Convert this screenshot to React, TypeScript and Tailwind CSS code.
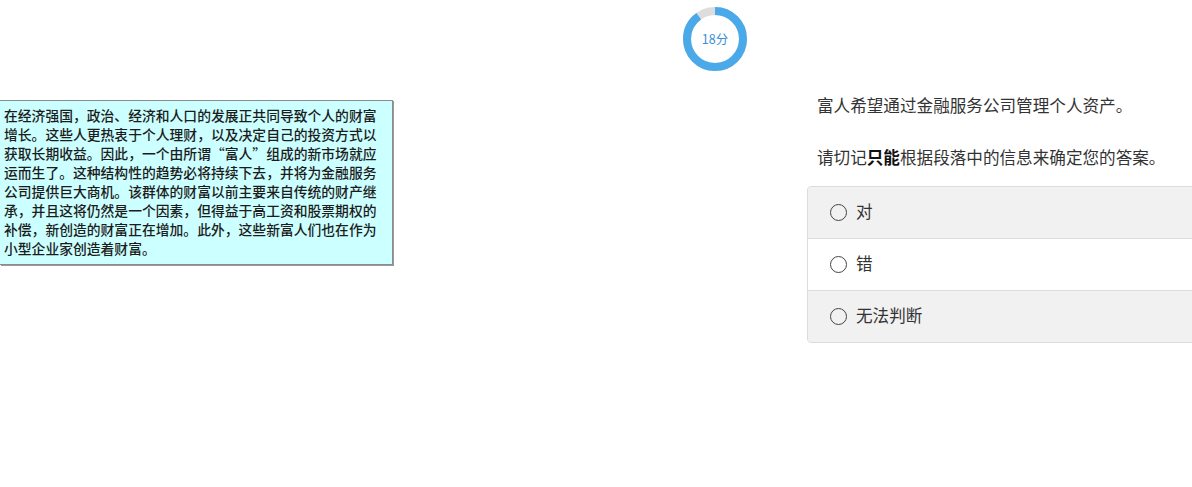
const passage = [
  "在经济强国，政治、经济和人口的发展正共同导致个人的财富",
  "增长。这些人更热衷于个人理财，以及决定自己的投资方式以",
  "获取长期收益。因此，一个由所谓“富人”组成的新市场就应",
  "运而生了。这种结构性的趋势必将持续下去，并将为金融服务",
  "公司提供巨大商机。该群体的财富以前主要来自传统的财产继",
  "承，并且这将仍然是一个因素，但得益于高工资和股票期权的",
  "补偿，新创造的财富正在增加。此外，这些新富人们也在作为",
  "小型企业家创造着财富。",
];

const options = ["对", "错", "无法判断"];

function Timer({ minutes, total }: { minutes: number; total: number }) {
  const r = 28;
  const c = 2 * Math.PI * r;
  const used = (minutes / total) * c;
  return (
    <div className="relative w-[64px] h-[64px]">
      <svg width="64" height="64" viewBox="0 0 64 64">
        <circle cx="32" cy="32" r={r} fill="none" stroke="#dddddd" strokeWidth="8" />
        <circle
          cx="32"
          cy="32"
          r={r}
          fill="none"
          stroke="#4aa9e9"
          strokeWidth="8"
          strokeDasharray={`${used} ${c}`}
          transform="rotate(-90 32 32)"
        />
      </svg>
      <div className="absolute inset-0 flex items-center justify-center text-[12.5px] text-[#3b8fd6]">
        {minutes}分
      </div>
    </div>
  );
}

export default function App() {
  return (
    <div
      className="w-[1192px] h-[487px] bg-white overflow-hidden text-[#333]"
      style={{ fontFamily: '"Noto Sans CJK SC", "Noto Sans", sans-serif' }}
    >
      <div className="pt-[7px] pl-[683px]">
        <Timer minutes={18} total={20} />
      </div>

      <div className="flex items-start mt-[22px]">
        <div className="mt-[7px] w-[393px] shrink-0 bg-[#ccffff] border border-l-0 border-[#8c8c8c] shadow-[1px_1px_0_#9a9a9a] pl-[4px] pt-[5px] pb-[6px]">
          {passage.map((line, i) => (
            <div key={i} className="text-[13.8px] leading-[19px] font-medium text-[#1c1c1c] whitespace-nowrap">
              {line}
            </div>
          ))}
        </div>

        <div className="ml-[414px] w-[420px] shrink-0">
          <p className="pl-[10px] text-[16.6px] leading-6">富人希望通过金融服务公司管理个人资产。</p>
          <p className="pl-[10px] mt-[28px] text-[16.6px] leading-6">
            请切记<span className="font-bold text-[#111]">只能</span>根据段落中的信息来确定您的答案。
          </p>

          <div className="mt-[17px] border border-[#dcdcdc] rounded-[4px] overflow-hidden">
            {options.map((opt, i) => (
              <div
                key={opt}
                className={`flex items-center gap-[9px] pl-[22px] text-[16.6px] ${
                  i % 2 === 0 ? "bg-[#f1f1f1]" : "bg-white"
                } ${i < options.length - 1 ? "border-b border-[#dcdcdc] h-[52px]" : "h-[51px]"}`}
              >
                <span className="w-[17px] h-[17px] rounded-full border-[1.5px] border-[#444] bg-transparent"></span>
                <span className="-mt-[2px]">{opt}</span>
              </div>
            ))}
          </div>
        </div>
      </div>
    </div>
  );
}
